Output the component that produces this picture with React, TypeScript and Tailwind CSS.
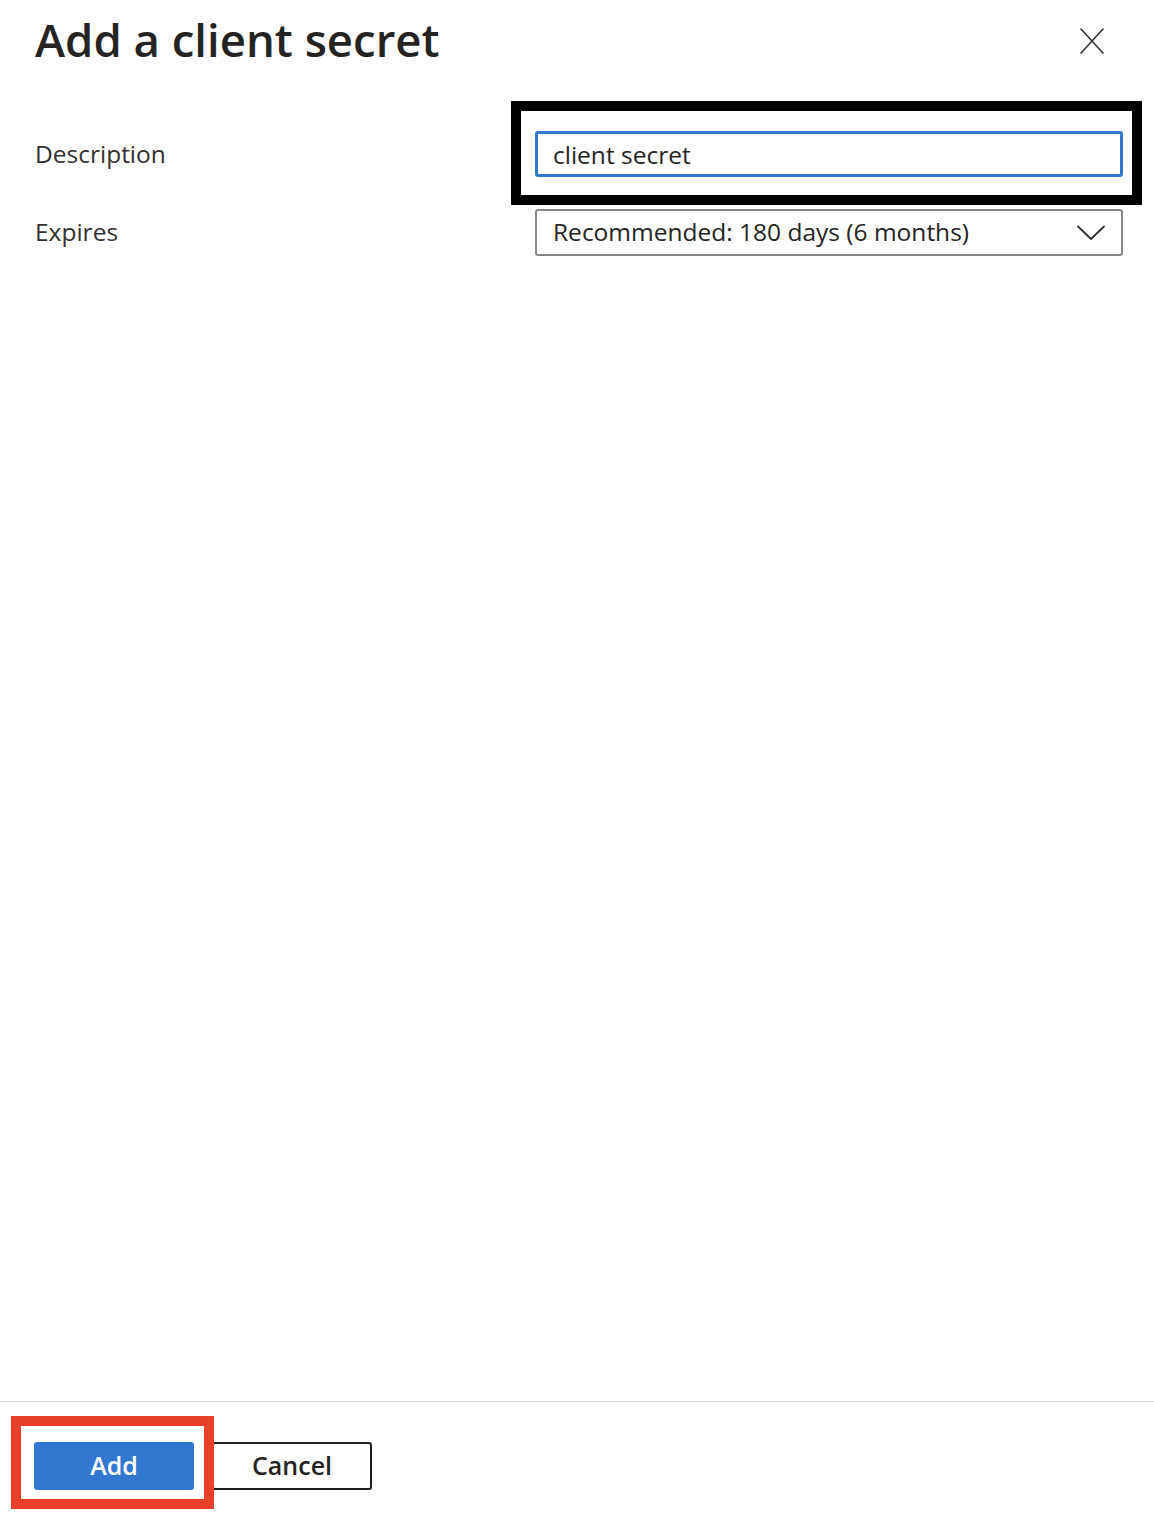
const font = { fontFamily: '"Open Sans", "Noto Sans", sans-serif' };

function CloseIcon() {
  return (
    <svg width="24" height="26" viewBox="0 0 24 26" fill="none" stroke="#323130" strokeWidth="1.6" strokeLinecap="round">
      <path d="M1 1 L23 25 M23 1 L1 25" />
    </svg>
  );
}

function Chevron() {
  return (
    <svg width="28" height="16" viewBox="0 0 28 16" fill="none" stroke="#323130" strokeWidth="1.8" strokeLinecap="round" strokeLinejoin="round">
      <path d="M1 1.5 L14 14 L27 1.5" />
    </svg>
  );
}

export default function App() {
  return (
    <div className="h-[1516px] w-[1154px] bg-white flex flex-col text-[#323130]" style={font}>
      {/* Header */}
      <div className="flex items-start justify-between pl-[35px] pr-[50px] pt-[6px]">
        <h1 className="text-[45.5px] leading-[66px] font-semibold text-[#252423]">Add a client secret</h1>
        <button type="button" className="mt-[22px]">
          <CloseIcon />
        </button>
      </div>

      {/* Form */}
      <div className="flex flex-col gap-[32px] pl-[35px] pt-[59px]">
        <div className="flex items-center">
          <label className="w-[500px] text-[24.5px]">Description</label>
          <div className="relative">
            <input
              type="text"
              defaultValue="client secret"
              className="h-[46px] w-[588px] rounded-[3px] border-[3px] border-[#3277d0] px-[15px] text-[24.5px] text-[#252423] outline-none"
              style={font}
            />
            <div className="pointer-events-none absolute -left-[24px] -top-[30px] h-[104px] w-[631px] border-[10px] border-black" />
          </div>
        </div>

        <div className="flex items-center">
          <label className="w-[500px] text-[24.5px]">Expires</label>
          <button
            type="button"
            className="flex h-[47px] w-[588px] items-center justify-between rounded-[3px] border-2 border-[#8a8886] pl-[16px] pr-[16px] text-[24.5px] text-[#252423]"
          >
            <span>Recommended: 180 days (6 months)</span>
            <Chevron />
          </button>
        </div>
      </div>

      <div className="flex-1" />

      {/* Footer */}
      <div className="border-t border-[#e1dfdd] pl-[34px] pt-[40px] pb-[26px]">
        <div className="flex items-center gap-[18px]">
          <div className="relative">
            <button type="button" className="h-[48px] w-[160px] rounded-[3px] bg-[#3277d0] text-[25px] font-semibold text-white">
              Add
            </button>
            <div className="pointer-events-none absolute -left-[23px] -top-[26px] h-[93px] w-[203px] border-[10px] border-[#e8402a]" />
          </div>
          <button type="button" className="h-[48px] w-[160px] rounded-[3px] border-2 border-[#201f1e] text-[25px] font-semibold text-[#252423]">
            Cancel
          </button>
        </div>
      </div>
    </div>
  );
}
